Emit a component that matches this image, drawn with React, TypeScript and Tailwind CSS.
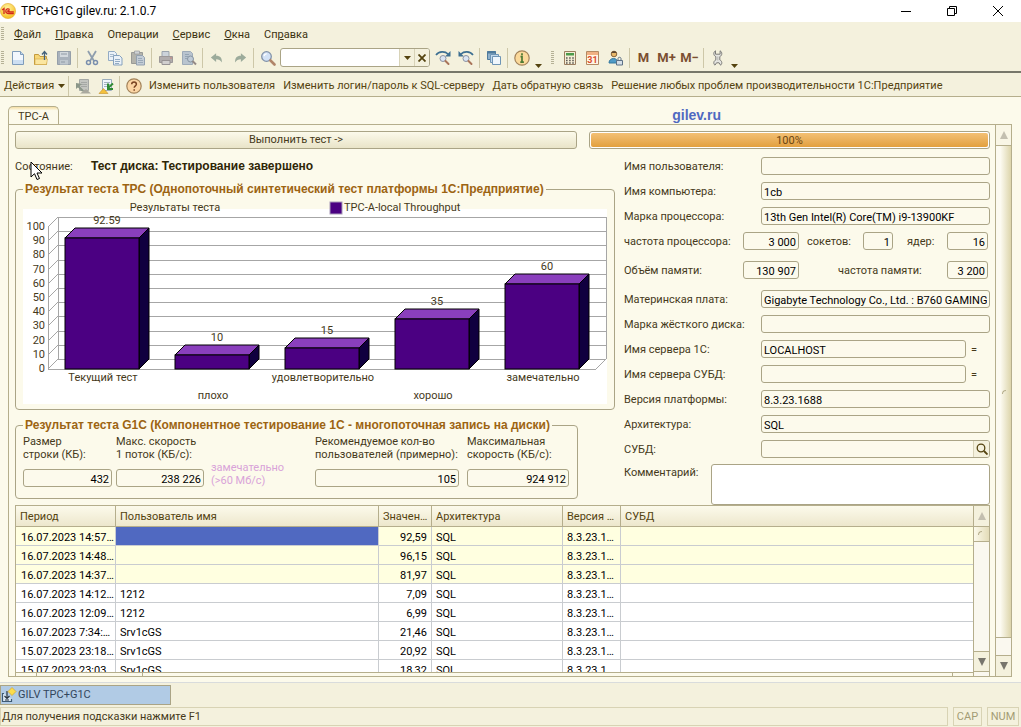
import type { ReactNode } from 'react'
import { clsx } from 'clsx'

const bars = [
  { name: 'Текущий тест', value: 92.59, low: false },
  { name: 'плохо', value: 10, low: true },
  { name: 'удовлетворительно', value: 15, low: false },
  { name: 'хорошо', value: 35, low: true },
  { name: 'замечательно', value: 60, low: false },
]

const rows = [
  { period: '16.07.2023 14:57…', user: '', value: '92,59', fresh: true, selected: true },
  { period: '16.07.2023 14:48…', user: '', value: '96,15', fresh: true },
  { period: '16.07.2023 14:37…', user: '', value: '81,97', fresh: true },
  { period: '16.07.2023 14:12…', user: '1212', value: '7,09' },
  { period: '16.07.2023 12:09…', user: '1212', value: '6,99' },
  { period: '16.07.2023 7:34:…', user: 'Srv1cGS', value: '21,46' },
  { period: '15.07.2023 23:18…', user: 'Srv1cGS', value: '20,92' },
  { period: '15.07.2023 23:03…', user: 'Srv1cGS', value: '18,32' },
]

/* ---------- Icons ---------- */

function Svg({ children, size = 16 }: { children: ReactNode; size?: number }) {
  return (
    <svg width={size} height={size} viewBox="0 0 16 16" fill="none" className="shrink-0">
      {children}
    </svg>
  )
}

const LogoIcon = () => (
  <svg width="16" height="16" viewBox="0 0 16 16" className="shrink-0">
    <defs>
      <radialGradient id="logo" cx="0.45" cy="0.3" r="0.7">
        <stop offset="0" stopColor="#fff3a0" />
        <stop offset="1" stopColor="#f5bd1f" />
      </radialGradient>
    </defs>
    <circle cx="8" cy="8" r="7.6" fill="url(#logo)" stroke="#e3a92c" strokeWidth="0.6" />
    <path d="M2.2 7 4 5.6V11M9.6 6.6C8.6 5.3 5.8 5.6 5.8 8.1c0 2 1.5 2.5 3 2.5h5M9.4 8.2c-.3-.7-1.7-.8-1.7.1 0 .6.6.7 1.2.7h4.9" stroke="#d2261c" strokeWidth="1.3" fill="none" />
  </svg>
)

const NewIcon = () => (
  <Svg>
    <path d="M2.5 1.5h8l3 3v10h-11z" fill="#f2f7fd" stroke="#7f9cba" />
    <path d="M3 10h10v4H3z" fill="#cddff2" />
    <path d="M10.5 1.5v3h3" fill="#c4d7ec" stroke="#7f9cba" />
  </Svg>
)

const OpenIcon = () => (
  <Svg>
    <path d="M1.5 14.5v-10h4l1.5 2h6.5v8z" fill="#f7d777" stroke="#c49a3c" />
    <path d="M2 9h12.5l-1 5.5H2z" fill="#fbe6a0" stroke="#d0a74a" strokeWidth="0.6" />
    <path d="M11.5 10V2M9 4.5 11.5 1.5 14 4.5" stroke="#44627c" strokeWidth="1.3" />
  </Svg>
)

const SaveIcon = () => (
  <Svg>
    <path d="M1.5 1.5h13v13h-13z" fill="#a9b2bc" stroke="#959fa9" />
    <path d="M4 2h8v5H4z" fill="#d3d9de" />
    <path d="M4 10h8v4.5H4z" fill="#bfc7ce" />
    <path d="M5 4h6M5 12h4" stroke="#909aa5" />
  </Svg>
)

const CutIcon = () => (
  <Svg>
    <path d="M4 1l6 10M12 1 6 11" stroke="#8f9eae" strokeWidth="1.8" />
    <circle cx="4.5" cy="12.5" r="2" stroke="#7a8fae" strokeWidth="1.5" />
    <circle cx="11.5" cy="12.5" r="2" stroke="#7a8fae" strokeWidth="1.5" />
  </Svg>
)

const CopyIcon = () => (
  <Svg>
    <path d="M1.5 1.5h6l2 2v7h-8z" fill="#eaf1f8" stroke="#93abc4" />
    <path d="M3 4.5h4M3 6.5h4" stroke="#a7bacd" />
    <path d="M6.5 5.5h6l2.5 2.5v7H6.5z" fill="#eaf1f8" stroke="#86a1bd" />
    <path d="M8 9.5h5M8 11.5h5M8 13.5h4" stroke="#93abc4" />
  </Svg>
)

const PasteIcon = () => (
  <Svg>
    <path d="M1.5 2.5h11v11h-11z" fill="#b3b3ac" stroke="#999a96" />
    <path d="M4.5 1h5v3h-5z" fill="#cfd3d6" stroke="#96999c" strokeWidth="0.7" />
    <path d="M6.5 5.5h6l2 2v7.5h-8z" fill="#c3ccd6" stroke="#93a1b0" />
    <path d="M8 8.5h4M8 10.5h5M8 12.5h5" stroke="#9aa9b8" />
  </Svg>
)

const PrintIcon = () => (
  <Svg>
    <path d="M4 1.5h7v5H4z" fill="#ccd3da" stroke="#9ba4ad" />
    <path d="M1.5 6.5h13v6h-13z" fill="#b0acac" stroke="#9c9898" />
    <path d="M4 10.5h8v4H4z" fill="#d1cfcf" stroke="#979394" />
    <path d="M12 8h2" stroke="#c7837b" />
  </Svg>
)

const PreviewIcon = () => (
  <Svg>
    <path d="M1.5 1.5h8l2 2v11h-10z" fill="#b9c4cf" stroke="#9eabb8" />
    <path d="M4 4.5h4M4 6.5h3M4 8.5h2" stroke="#95a5b4" />
    <circle cx="9.5" cy="9" r="3" fill="#bfcad6" stroke="#8795a3" />
    <path d="m11.5 11 3.5 3.5" stroke="#948986" strokeWidth="2" />
  </Svg>
)

const ArrowIcon = ({ flip }: { flip?: boolean }) => (
  <Svg size={14}>
    <g transform={flip ? 'matrix(-1 0 0 1 16 0)' : undefined}>
      <path d="M1 7.5 7 2.5v3c5 0 7 3 6.5 7.5C12 10.5 10 9.5 7 9.5v3z" fill="#9cab9b" />
    </g>
  </Svg>
)

const FindIcon = () => (
  <Svg>
    <circle cx="6.5" cy="6.5" r="4.8" fill="#d3e2f6" stroke="#8292a8" strokeWidth="1.3" />
    <path d="M4 6c.3-1.5 1.5-2.3 2.7-2.2" stroke="#fff" strokeWidth="1.3" />
    <path d="m10.5 10.5 4 4" stroke="#b08469" strokeWidth="2.6" strokeLinecap="round" />
  </Svg>
)

const FindNextIcon = ({ flip }: { flip?: boolean }) => (
  <Svg>
    <g transform={flip ? 'matrix(-1 0 0 1 16 0)' : undefined}>
      <path d="M1 5C4 1 10 1 13 4" stroke="#3d6f92" strokeWidth="1.6" />
      <path d="M15.5 1v5.5H10z" fill="#3d6f92" />
    </g>
    <circle cx="8" cy="8.5" r="3" fill="#d9e4f3" stroke="#8c93a3" />
    <path d="m10.5 11 3 3" stroke="#a9755a" strokeWidth="2" strokeLinecap="round" />
  </Svg>
)

const CascadeIcon = () => (
  <Svg>
    <path d="M1.5 1.5h8v8h-8z" fill="#8fb0ca" stroke="#4f7b9c" />
    <path d="M1 2.5h9" stroke="#4f7b9c" strokeWidth="2" />
    <path d="M4.5 4.5h8v8h-8z" fill="#c3d9ec" stroke="#6f95b5" />
    <path d="M6.5 6.5h8v8h-8z" fill="#eff6fc" stroke="#6f95b5" />
  </Svg>
)

const RoundIcon = ({ help }: { help?: boolean }) => (
  <Svg>
    <circle cx="8" cy="8" r="7.2" fill={help ? '#fbd5a4' : '#fbd99a'} stroke="#a3835a" strokeWidth="1.2" />
    {help ? (
      <path d="M5.7 6.2c0-3 4.7-3 4.7 0 0 1.6-2.2 1.7-2.2 3.6M8.2 11.2v1.6" stroke="#7a4423" strokeWidth="1.5" />
    ) : (
      <path d="M8 3.2v2M6.5 6.7H8V12M6.3 12.2h3.6" stroke="#4d7a33" strokeWidth="1.7" />
    )}
  </Svg>
)

const CalcIcon = () => (
  <Svg>
    <path d="M2.5 1.5h11v13h-11z" fill="#f5eed6" stroke="#9b7e60" />
    <path d="M4 3h8v2.5H4z" fill="#4c9a4a" />
    <path d="M4 8h8M4 10.5h8M4 13h8" stroke="#5e5a55" strokeWidth="1.5" strokeDasharray="1.6 1.5" />
  </Svg>
)

const CalendarIcon = () => (
  <svg width="16" height="16" viewBox="0 0 16 16" className="shrink-0">
    <path d="M1.5 1.5h12v13h-12z" fill="#fff6e4" stroke="#b48a63" />
    <path d="M2 2h11v3H2z" fill="#f1b183" />
    <text x="7.5" y="13" textAnchor="middle" fontSize="9" fontWeight="700" fill="#d84a2d">31</text>
  </svg>
)

const UserLockIcon = () => (
  <Svg>
    <circle cx="6" cy="4" r="2.8" fill="#e9b869" stroke="#87643a" />
    <path d="M3.5 3C4 .5 8 .5 8.500 3z" fill="#5b4632" />
    <path d="M1 13c0-6 9-6 9 0z" fill="#4f9ac6" stroke="#34789f" />
    <path d="M8.5 10.5h6v4.5h-6z" fill="#d6dfe8" stroke="#5d7186" />
    <path d="M10 10V8.5c0-1.6 3-1.6 3 0V10" stroke="#5d7186" />
  </Svg>
)

const WrenchIcon = () => (
  <Svg>
    <path d="M5.500.8C3.200 2 3.200 5.500 5.800 6.600v3.300c-2.400 1-2.600 4-.8 5.300l1.500-2.400h2.600l1.500 2.400c1.800-1.300 1.600-4.300-.8-5.300V6.600c2.600-1.100 2.600-4.600.3-5.800v3.400H5.500z" fill="#e6e6e2" stroke="#7b7b78" strokeLinejoin="round" />
    <path d="M7.8 6.500v4" stroke="#b5b5b0" />
  </Svg>
)

const SheetIcon = ({ on }: { on?: boolean }) => (
  <Svg>
    <path d="M4.5 1.5h9v11h-9z" fill={on ? '#f1f6fb' : '#c3c5c0'} stroke={on ? '#9badbd' : '#a5a8a5'} />
    <path d="M6 4.5h6M6 6.5h6M6 8.500h6" stroke={on ? '#a5b3c0' : '#a5a8a5'} />
    {on ? (
      <>
        <path d="M15 5.5 10 10M10 5.5V11h5" stroke="#2f8b34" strokeWidth="2" />
        <path d="M1 15.500 5.500 10.500l4.500 5z" fill="#f4c13d" stroke="#c5902a" strokeWidth="0.6" />
      </>
    ) : (
      <>
        <path d="M1 5v6l6-5z" fill="#8b9789" />
        <path d="m2 7 6 6" stroke="#8b9789" strokeWidth="2" />
        <path d="M5 15.5h11L11 11z" fill="#aaa99f" />
      </>
    )}
  </Svg>
)

const TaskIcon = () => (
  <Svg>
    <path d="M3 6.5H1.5v8h9V12" stroke="#3d5a74" strokeWidth="1.2" fill="#dbe8f4" />
    <path d="M6 4v7M3.500 9 6 11.500 8.500 9M4 13h4" stroke="#26333f" strokeWidth="1.2" />
    <path d="m11 .5 4 4-4 4-4-4z" fill="#fbdc4d" stroke="#d1a42c" strokeWidth="0.7" />
  </Svg>
)

const Triangle = ({ up, dim }: { up?: boolean; dim?: boolean }) => (
  <svg width="8" height="8" viewBox="0 0 8 8">
    <path d={up ? 'M4 0 8 8H0z' : 'M0 0h8L4 8z'} fill={dim ? '#c3bfb0' : '#77756c'} />
  </svg>
)

const Caret = () => (
  <svg width="7" height="4" viewBox="0 0 7 4" className="shrink-0">
    <path d="M0 0h7L3.500 4z" fill="#54430f" />
  </svg>
)

/* ---------- Small controls ---------- */

function Tool({ label, children }: { label: string; children: ReactNode }) {
  return (
    <button type="button" aria-label={label} className="flex h-5 w-[23px] shrink-0 items-center justify-center text-[13px] font-bold text-[#7b4f31]">
      {children}
    </button>
  )
}

const Sep = () => <span className="mx-0.5 h-5 w-px shrink-0 bg-[#cdc7a8]" />
const Grip = () => <span className="h-3.5 w-[3px] shrink-0 bg-[repeating-linear-gradient(#b5b196_0px_1px,transparent_1px_2px)]" />

const MenuCaret = ({ label }: { label: string }) => (
  <button type="button" aria-label={label} className="flex h-5 w-2.5 shrink-0 items-end justify-center">
    <Caret />
  </button>
)

const boxClass = 'h-[18px] rounded-[3px] border border-[#aaa486] bg-[#fcfaec] px-0.5 pt-0.5 text-black'

function Box({ id, value, className, right }: { id: string; value?: string; className?: string; right?: boolean }) {
  return <input id={id} readOnly defaultValue={value} className={clsx(boxClass, right && 'text-right', className)} />
}

function Row({ id, label, children }: { id: string; label: string; children: ReactNode }) {
  return (
    <div className="flex h-[18px] items-center">
      <label htmlFor={id} className="w-[137px] shrink-0">{label}</label>
      {children}
    </div>
  )
}

/* ---------- Chart ---------- */

function Chart() {
  const unit = 1.42
  const ticks = [0, 10, 20, 30, 40, 50, 60, 70, 80, 90, 100]
  return (
    <svg viewBox="0 0 584 208" className="block w-full" fontSize="11" fill="#45391a">
      <rect x="0" y="12" width="584" height="195" fill="#fff" />
      <text x="152" y="14" textAnchor="middle">Результаты теста</text>
      <rect x="307" y="5" width="12" height="12" fill="#4b0082" stroke="#a79ab8" />
      <text x="321" y="14">TPC-A-local Throughput</text>
      <g stroke="#a6a6a6" fill="none" shapeRendering="crispEdges">
        {ticks.map((t) => (
          <path key={t} d={`M25 ${Math.round(172 - t * unit)} L35 ${Math.round(162 - t * unit)} H583`} />
        ))}
        <path d="M25 30V172H573L583 162V20M35 20V162" />
      </g>
      {ticks.map((t) => (
        <text key={t} x="22" y={175 - Math.round(t * unit)} textAnchor="end">{t}</text>
      ))}
      {bars.map((bar, i) => {
        const x = 42 + i * 110
        const top = 172 - Math.round(bar.value * unit)
        return (
          <g key={bar.name}>
            <g stroke="#000">
              <path d={`M${x} ${top} l10 -10 h74 l-10 10z`} fill="#8a3fbd" />
              <path d={`M${x + 74} ${top} l10 -10 V162 L${x + 74} 172z`} fill="#10003f" />
              <rect x={x} y={top} width="74" height={172 - top} fill="#4b0082" />
            </g>
            <text x={x + 42} y={top - 14} textAnchor="middle">{bar.value}</text>
            <text x={x + 38} y={bar.low ? 202 : 184} textAnchor="middle">{bar.name}</text>
          </g>
        )
      })}
    </svg>
  )
}

/* ---------- Page ---------- */

export default function App() {
  return (
    <div className="flex h-screen flex-col overflow-hidden bg-[#f4f1dd] font-['Roboto','Liberation_Sans',sans-serif] text-[11px] leading-[13px] text-[#45391a]">
      <header className="flex h-[22px] shrink-0 items-center bg-white text-[12px] text-black">
        <LogoIcon />
        <h1 className="ml-[5px] flex-1">TPC+G1C gilev.ru: 2.1.0.7</h1>
        <button type="button" aria-label="Свернуть" className="flex h-5 w-[46px] items-center justify-center">
          <svg width="10" height="10" viewBox="0 0 10 10"><path d="M0 5.5h10" stroke="#000" /></svg>
        </button>
        <button type="button" aria-label="Развернуть" className="flex h-5 w-[46px] items-center justify-center">
          <svg width="10" height="10" viewBox="0 0 10 10" fill="none" stroke="#000"><path d="M.5 2.5h7v7h-7zM2.5 2.5v-2h7v7h-2" /></svg>
        </button>
        <button type="button" aria-label="Закрыть" className="flex h-5 w-[46px] items-center justify-center">
          <svg width="10" height="10" viewBox="0 0 10 10" stroke="#000"><path d="m0 0 10 10M10 0 0 10" /></svg>
        </button>
      </header>

      {/* Menu */}
      <nav className="flex h-6 shrink-0 items-center pl-px">
        <Grip />
        <div className="ml-2.5 flex gap-3.5 text-[#3c3210]">
          <button type="button"><u>Ф</u>айл</button>
          <button type="button"><u>П</u>равка</button>
          <button type="button">Операции</button>
          <button type="button"><u>С</u>ервис</button>
          <button type="button"><u>О</u>кна</button>
          <button type="button">Сп<u>р</u>авка</button>
        </div>
      </nav>

      {/* Toolbar */}
      <div className="flex h-[27px] shrink-0 items-center border-b-2 border-[#77776a] pb-0.5 pl-px">
        <Grip />
        <div className="ml-0.5 flex items-center">
          <Tool label="Новый"><NewIcon /></Tool>
          <Tool label="Открыть"><OpenIcon /></Tool>
          <Tool label="Сохранить"><SaveIcon /></Tool>
          <Sep />
          <Tool label="Вырезать"><CutIcon /></Tool>
          <Tool label="Копировать"><CopyIcon /></Tool>
          <Tool label="Вставить"><PasteIcon /></Tool>
          <Sep />
          <Tool label="Печать"><PrintIcon /></Tool>
          <Tool label="Просмотр"><PreviewIcon /></Tool>
          <Sep />
          <Tool label="Отменить"><ArrowIcon /></Tool>
          <Tool label="Вернуть"><ArrowIcon flip /></Tool>
          <Sep />
          <Tool label="Найти"><FindIcon /></Tool>
          <div className="mx-px flex h-[19px] w-[150px] overflow-hidden rounded-[3px] border border-[#aaa486] bg-white">
            <input aria-label="Поиск" className="min-w-0 flex-1 px-1" />
            <button type="button" aria-label="Список" className="flex w-[15px] items-center justify-center border-l border-[#d8d3b8] bg-[#f4f1dd]">
              <Caret />
            </button>
            <button type="button" aria-label="Очистить" className="flex w-[15px] items-center justify-center border-l border-[#d8d3b8] bg-[#f4f1dd]">
              <svg width="8" height="8" viewBox="0 0 8 8" stroke="#54430f" strokeWidth="1.8"><path d="m.5.5 7 7M7.500.5l-7 7" /></svg>
            </button>
          </div>
          <Tool label="Найти следующий"><FindNextIcon /></Tool>
          <Tool label="Найти предыдущий"><FindNextIcon flip /></Tool>
          <Sep />
          <Tool label="Окна"><CascadeIcon /></Tool>
          <Sep />
          <Tool label="О программе"><RoundIcon /></Tool>
          <MenuCaret label="Ещё" />
        </div>
        <div className="ml-2 flex items-center gap-1">
          <Grip />
          <div className="flex items-center">
            <Tool label="Калькулятор"><CalcIcon /></Tool>
            <Tool label="Календарь"><CalendarIcon /></Tool>
            <Tool label="Пользователи"><UserLockIcon /></Tool>
            <Sep />
            <Tool label="M">M</Tool>
            <Tool label="M+">M+</Tool>
            <Tool label="M−">M−</Tool>
            <Sep />
            <Tool label="Настройка"><WrenchIcon /></Tool>
            <MenuCaret label="Настройки" />
          </div>
        </div>
      </div>

      {/* Form actions */}
      <div className="flex h-6 shrink-0 items-center border-b border-[#b5ae8c] pt-0.5 pl-1 text-[#54430f]">
        <button type="button" className="flex w-[62px] items-center gap-1">Действия <Caret /></button>
        <Sep />
        <Tool label="Перечитать"><SheetIcon /></Tool>
        <Tool label="Записать"><SheetIcon on /></Tool>
        <Sep />
        <Tool label="Справка"><RoundIcon help /></Tool>
        <div className="ml-1 flex gap-2 whitespace-nowrap">
          <button type="button">Изменить пользователя</button>
          <button type="button">Изменить логин/пароль к SQL-серверу</button>
          <button type="button">Дать обратную связь</button>
          <button type="button">Решение любых проблем производительности 1С:Предприятие</button>
        </div>
      </div>

      <main className="flex min-h-0 flex-1 flex-col border-b border-[#d9dcdc] bg-[#fcfaeb] px-2 pb-[5px]">
        <div className="flex h-[27px] shrink-0 items-end">
          <button type="button" className="-mb-px h-[19px] w-[51px] rounded-t-[5px] border border-b-0 border-[#b5ae8c] bg-[#fcfaeb] bg-linear-to-b from-[#f6dfa5] via-[#fcfaeb] via-20% to-[#fcfaeb]">TPC-A</button>
          <a href="#gilev" className="mr-[292px] ml-auto h-4 font-['Liberation_Sans',sans-serif] text-[14px] leading-[14px] font-bold text-[#5069c1]">gilev.ru</a>
        </div>

        <div className="mr-px flex min-h-0 flex-1 border border-[#b5ae8c]">
          <div className="flex min-w-0 flex-1 flex-col pt-1.5 pr-[5px] pl-1.5">
            <div className="flex h-[18px] shrink-0 gap-3">
              <button type="button" className="flex-1 rounded-[3px] border border-[#aaa486] bg-linear-to-b from-[#fcfaeb] to-[#e9e4c8] leading-4">Выполнить тест -&gt;</button>
              <div role="progressbar" aria-valuenow={100} className="w-[401px] rounded-[3px] border border-[#aaa486] bg-white p-px">
                <div className="h-full rounded-[2px] bg-linear-to-b from-[#f3c074] to-[#e2a03d] text-center leading-[15px] text-[#6b4510]">100%</div>
              </div>
            </div>

            <div className="flex shrink-0 gap-[9px]">
              <div className="min-w-0 flex-1">
                <div className="relative flex h-8 items-center pt-0.5">
                  <span className="w-[76px]">Состояние:</span>
                  <strong className="font-['Liberation_Sans',sans-serif] text-[12px] text-[#2e2506]">Тест диска: Тестирование завершено</strong>
                  <svg width="13" height="20" viewBox="0 0 13 20" className="absolute top-3 left-[15px]">
                    <path d="M1 1v15l3.5-3.3L7 18.500l2.500-1L7 12h5z" fill="#fff" stroke="#000" />
                  </svg>
                </div>

                <fieldset className="rounded-[4px] border border-[#aaa486] px-[7px] pb-1">
                  <legend className="h-4 px-0.5 font-['Liberation_Sans',sans-serif] text-[12px] leading-4 font-bold text-[#9c6412]">Результат теста TPC (Однопоточный синтетический тест платформы 1С:Предприятие)</legend>
                  <Chart />
                </fieldset>

                <fieldset className="mt-[7px] w-[563px] rounded-[4px] border border-[#aaa486] px-[7px] pb-[11px]">
                  <legend className="h-4 px-0.5 font-['Liberation_Sans',sans-serif] text-[12px] leading-4 font-bold text-[#9c6412]">Результат теста G1C (Компонентное тестирование 1С - многопоточная запись на диски)</legend>
                  <div className="flex items-end pt-0.5 whitespace-nowrap">
                    <div className="mr-1 flex flex-col gap-2">
                      <label htmlFor="rowSize">Размер<br />строки (КБ):</label>
                      <Box id="rowSize" value="432" right className="w-[89px]" />
                    </div>
                    <div className="flex flex-col gap-2">
                      <label htmlFor="oneThread">Макс. скорость<br />1 поток (КБ/с):</label>
                      <Box id="oneThread" value="238 226" right className="w-[88px]" />
                    </div>
                    <p className="w-[111px] pl-[7px] text-[#d9a3d9]">замечательно<br />(&gt;60 Мб/с)</p>
                    <div className="mr-2 flex flex-col gap-2">
                      <label htmlFor="users">Рекомендуемое кол-во<br />пользователей (примерно):</label>
                      <Box id="users" value="105" right className="w-[144px]" />
                    </div>
                    <div className="flex flex-col gap-2">
                      <label htmlFor="maxSpeed">Максимальная<br />скорость (КБ/с):</label>
                      <Box id="maxSpeed" value="924 912" right className="w-[102px]" />
                    </div>
                  </div>
                </fieldset>
              </div>

              <div className="flex w-[366px] flex-col gap-[7px] pt-2">
                <Row id="user" label="Имя пользователя:"><Box id="user" className="min-w-0 flex-1" /></Row>
                <Row id="pc" label="Имя компьютера:"><Box id="pc" value="1cb" className="min-w-0 flex-1" /></Row>
                <Row id="cpu" label="Марка процессора:"><Box id="cpu" value="13th Gen Intel(R) Core(TM) i9-13900KF" className="min-w-0 flex-1" /></Row>
                <div className="flex h-[18px] items-center pr-0.5">
                  <label htmlFor="cpuFreq" className="w-[119px]">частота процессора:</label>
                  <Box id="cpuFreq" value="3 000" right className="w-14" />
                  <label htmlFor="sockets" className="ml-2 w-14">сокетов:</label>
                  <Box id="sockets" value="1" right className="w-[30px]" />
                  <label htmlFor="cores" className="ml-auto w-10">ядер:</label>
                  <Box id="cores" value="16" right className="w-[41px]" />
                </div>
                <div className="my-1 flex h-[18px] items-center pr-0.5">
                  <label htmlFor="mem" className="w-[119px]">Объём памяти:</label>
                  <Box id="mem" value="130 907" right className="w-14" />
                  <label htmlFor="memFreq" className="ml-auto w-[109px]">частота памяти:</label>
                  <Box id="memFreq" value="3 200" right className="w-[41px]" />
                </div>
                <Row id="board" label="Материнская плата:"><Box id="board" value="Gigabyte Technology Co., Ltd. : B760 GAMING" className="min-w-0 flex-1" /></Row>
                <Row id="disk" label="Марка жёсткого диска:"><Box id="disk" className="min-w-0 flex-1" /></Row>
                <Row id="srv" label="Имя сервера 1С:"><Box id="srv" value="LOCALHOST" className="w-[205px]" /><span className="ml-[5px]">=</span></Row>
                <Row id="dbsrv" label="Имя сервера СУБД:"><Box id="dbsrv" className="w-[205px]" /><span className="ml-[5px]">=</span></Row>
                <Row id="ver" label="Версия платформы:"><Box id="ver" value="8.3.23.1688" className="min-w-0 flex-1" /></Row>
                <Row id="arch" label="Архитектура:"><Box id="arch" value="SQL" className="min-w-0 flex-1" /></Row>
                <Row id="dbms" label="СУБД:">
                  <div className="flex h-[18px] min-w-0 flex-1 overflow-hidden rounded-[3px] border border-[#aaa486] bg-[#fcfaec]">
                    <input id="dbms" className="min-w-0 flex-1 px-1" />
                    <button type="button" aria-label="Открыть СУБД" className="flex w-4 items-center justify-center border-l border-[#d8d3b8] bg-[#f4f1dd]">
                      <svg width="12" height="12" viewBox="0 0 12 12" fill="none" stroke="#54430f"><circle cx="5" cy="5" r="3.8" strokeWidth="1.3" /><path d="m8 8 3.5 3.5" strokeWidth="1.8" /></svg>
                    </button>
                  </div>
                </Row>
                <div className="-mt-px flex justify-between">
                  <label htmlFor="comment" className="pt-0.5">Комментарий:</label>
                  <textarea id="comment" className="block h-[41px] w-[279px] resize-none rounded-[3px] border border-[#aaa486] bg-white p-1" />
                </div>
              </div>
            </div>

            {/* History */}
            <div className="flex min-h-0 flex-1 border border-b-0 border-[#b5ae8c] bg-white">
              <div className="flex min-w-0 flex-1 flex-col">
                <div className="min-h-0 flex-1 overflow-hidden">
                  <table className="w-full table-fixed border-separate border-spacing-0 whitespace-nowrap text-black">
                    <colgroup>
                      <col className="w-[100px]" />
                      <col className="w-[263px]" />
                      <col className="w-[53px]" />
                      <col className="w-[131px]" />
                      <col className="w-[58px]" />
                      <col />
                    </colgroup>
                    <thead className="text-left text-[#54430f]">
                      <tr className="h-[21px] bg-linear-to-b from-[#fcfaeb] to-[#ece6cb]">
                        {['Период', 'Пользователь имя', 'Значен…', 'Архитектура', 'Версия …', 'СУБД'].map((h) => (
                          <th key={h} scope="col" className="overflow-hidden border-r border-b border-[#b5ae8c] p-0 pl-1 font-normal last:border-r-0">{h}</th>
                        ))}
                      </tr>
                    </thead>
                    <tbody>
                      {rows.map((r) => (
                        <tr key={r.period} className={clsx('h-[19px] *:overflow-hidden *:border-r *:border-b *:border-[#c9ccd0] *:p-0 *:pt-0.5 *:last:border-r-0', r.fresh && 'bg-[#ffffe0]')}>
                          <td className="pl-[5px]!">{r.period}</td>
                          <td className={clsx('pl-1!', r.selected && 'bg-[#5069c1]')}>{r.user}</td>
                          <td className="pr-1! text-right">{r.value}</td>
                          <td className="pl-1!">SQL</td>
                          <td className="pl-1!">8.3.23.1…</td>
                          <td />
                        </tr>
                      ))}
                    </tbody>
                  </table>
                </div>
                <div className="flex h-1 shrink-0 justify-between border-t border-[#b5ae8c] bg-[#fcfaeb]">
                  <span className="ml-5 w-[107px] border-x border-[#b5ae8c]" />
                  <span className="w-[21px] border-l border-[#b5ae8c]" />
                </div>
              </div>
              <div className="flex w-4 flex-col border-l border-[#b5ae8c] bg-[#faf8ef] pb-1">
                <button type="button" aria-label="Вверх" className="flex h-[21px] items-center justify-center border-b border-[#b5ae8c] bg-[#f4f1dd]"><Triangle up dim /></button>
                <span className="h-[15px] border-b border-[#b5ae8c] bg-linear-to-r from-[#fcfaeb] to-[#e3dcb8] p-1">
                  <span className="block size-1 rounded-tl-sm border-t border-l border-[#b5ae8c]" />
                </span>
                <span className="flex-1" />
                <button type="button" aria-label="Вниз" className="flex h-[21px] items-center justify-center border-y border-[#b5ae8c] bg-[#f4f1dd]"><Triangle /></button>
              </div>
            </div>
          </div>

          {/* Page scrollbar */}
          <div className="flex w-4 shrink-0 flex-col border-l border-[#b5ae8c] bg-[#faf8ef]">
            <button type="button" aria-label="Прокрутить вверх" className="flex h-[21px] items-center justify-center border-b border-[#b5ae8c] bg-[#f9f6e6]"><Triangle up dim /></button>
            <span className="flex flex-1 items-center justify-center border-b border-[#b5ae8c] bg-linear-to-r from-[#fcfaf0] from-30% to-[#ddd5ab]">
              <span className="size-1 rounded-tl-sm border-t border-l border-[#b5ae8c]" />
            </span>
            <span className="h-[17px]" />
            <button type="button" aria-label="Прокрутить вниз" className="flex h-[21px] items-center justify-center border-t border-[#b5ae8c] bg-[#f4f1dd]"><Triangle /></button>
          </div>
        </div>
      </main>

      <div className="flex h-[23px] shrink-0 items-center">
        <button type="button" className="flex h-5 w-[171px] items-center gap-px border border-[#aaa486] bg-[#b1cbe5] text-[#33465c]">
          <TaskIcon /> GILV TPC+G1C
        </button>
      </div>

      <footer className="flex h-[21px] shrink-0 items-start gap-[5px] pt-px pr-0.5 *:h-[19px] *:border *:border-[#d8d3b4] *:leading-[18px]">
        <span className="flex-1 pl-px">Для получения подсказки нажмите F1</span>
        <span className="w-[29px] text-center text-[#a39c74]">CAP</span>
        <span className="w-8 text-center text-[#a39c74]">NUM</span>
      </footer>
    </div>
  )
}
